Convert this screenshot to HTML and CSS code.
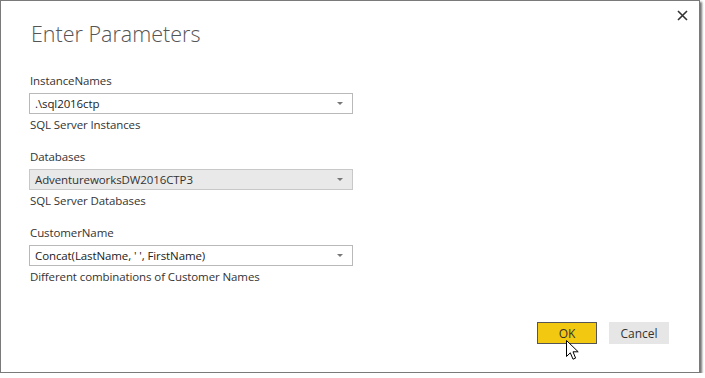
FILE: index.html
```html
<!DOCTYPE html>
<html lang="en">
<head>
    <meta charset="UTF-8">
    <title>Enter Parameters</title>
    <link rel="stylesheet" href="styles.css">
</head>
<body>
    <div class="dialog">
        <button class="close" title="Close">
            <svg width="11" height="11" viewBox="0 0 11 11"><path d="M1 1L10 10M10 1L1 10" stroke="#333" stroke-width="1.6"/></svg>
        </button>
        <h1 class="title">Enter Parameters</h1>

        <div class="field">
            <label>InstanceNames</label>
            <div class="select">
                <span>.\sql2016ctp</span>
                <span class="caret"></span>
            </div>
            <div class="hint">SQL Server Instances</div>
        </div>

        <div class="field">
            <label>Databases</label>
            <div class="select disabled">
                <span>AdventureworksDW2016CTP3</span>
                <span class="caret"></span>
            </div>
            <div class="hint">SQL Server Databases</div>
        </div>

        <div class="field">
            <label>CustomerName</label>
            <div class="select">
                <span>Concat(LastName, ' ', FirstName)</span>
                <span class="caret"></span>
            </div>
            <div class="hint">Different combinations of Customer Names</div>
        </div>

        <div class="actions">
            <button class="btn ok">OK</button>
            <button class="btn cancel">Cancel</button>
        </div>

        <!-- mouse pointer over OK -->
        <svg class="pointer" width="13" height="20" viewBox="0 0 13 20">
            <path d="M0.5 0.5V16.5L4.3 12.8L7 19.2L9.6 18.1L7 11.8H12.2Z" fill="#fff" stroke="#000" stroke-width="1" stroke-linejoin="round"/>
        </svg>
    </div>
</body>
</html>
```

FILE: styles.css
```css
body {
    margin: 0;
    background: #fff;
    font-family: "Segoe UI", "Open Sans", "Noto Sans", sans-serif;
    color: #333;
}

.dialog {
    position: relative;
    box-sizing: border-box;
    width: 700px;
    height: 373px;
    border: 1px solid #7a7a7a;
    background: #fff;
    box-shadow: 2px 2px 2px rgba(0, 0, 0, 0.55);
    padding: 18px 30px 0 28px;
}

.close {
    position: absolute;
    top: 4px;
    right: 7px;
    width: 20px;
    height: 20px;
    padding: 0;
    border: none;
    background: none;
    display: flex;
    align-items: center;
    justify-content: center;
}

.title {
    margin: 0 0 24px 2px;
    font-size: 21.5px;
    font-weight: 300;
    color: #555;
    line-height: 30px;
}

.field {
    margin-bottom: 16px;
}

.field label,
.hint {
    display: block;
    font-size: 11.5px;
    letter-spacing: -0.1px;
    line-height: 16px;
    color: #333;
}

.field label {
    margin: 0 0 4px 1px;
}

.hint {
    margin: 3px 0 0 1px;
}

.select {
    box-sizing: border-box;
    width: 324px;
    height: 21px;
    border: 1px solid #b9b9b9;
    display: flex;
    align-items: center;
    justify-content: space-between;
    padding: 0 9px 0 5px;
    font-size: 11.5px;
    letter-spacing: -0.1px;
    color: #222;
}

.select.disabled {
    background: #e9e9e9;
    border-color: #c8c8c8;
    color: #333;
}

.caret {
    width: 0;
    height: 0;
    border-left: 3px solid transparent;
    border-right: 3px solid transparent;
    border-top: 3px solid #777;
}

.actions {
    display: flex;
    justify-content: flex-end;
    gap: 12px;
    margin-top: 37px;
}

.btn {
    width: 60px;
    height: 22px;
    font-family: inherit;
    font-size: 12px;
    padding: 0;
    color: #333;
}

.ok {
    background: #f2c811;
    border: 1px solid #555;
}

.cancel {
    background: #e6e6e6;
    border: 1px solid #e6e6e6;
}

.pointer {
    position: absolute;
    left: 565px;
    top: 339px;
}
```
